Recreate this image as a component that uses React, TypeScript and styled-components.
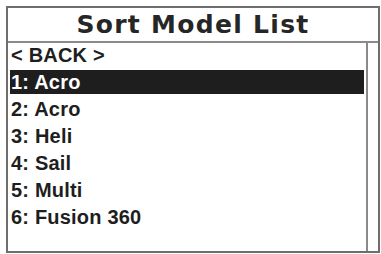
import styled, { createGlobalStyle } from "styled-components";

const GlobalStyle = createGlobalStyle`
  html, body {
    margin: 0;
    padding: 0;
    background: #ffffff;
  }
`;

const Frame = styled.div`
  box-sizing: border-box;
  margin: 6px 0 0 6px;
  width: 374px;
  height: 247px;
  border: 2px solid #6e6e6e;
  display: flex;
  flex-direction: column;
  background: #ffffff;
`;

const Header = styled.div`
  height: 35px;
  border-bottom: 2px solid #8a8a8a;
  display: flex;
  align-items: center;
  justify-content: center;
  padding-bottom: 1px;
  box-sizing: border-box;
  font-family: "DejaVu Sans", sans-serif;
  font-weight: 700;
  font-size: 25px;
  letter-spacing: 1.3px;
  color: #262626;
`;

const Body = styled.div`
  flex: 1;
  display: flex;
`;

const List = styled.ul`
  flex: 1;
  margin: 0;
  padding: 0 2px;
  list-style: none;
  display: flex;
  flex-direction: column;
  gap: 3px;
`;

const Row = styled.li<{ $selected?: boolean }>`
  height: 24px;
  display: flex;
  align-items: center;
  padding-left: 1px;
  font-family: "Liberation Sans", Arial, sans-serif;
  font-weight: 700;
  font-size: 20px;
  letter-spacing: 0.2px;
  color: ${(p) => (p.$selected ? "#ffffff" : "#1e1e1e")};
  background: ${(p) => (p.$selected ? "#1e1e1e" : "transparent")};
`;

const ScrollTrack = styled.div`
  width: 10px;
  border-left: 2px solid #8a8a8a;
`;

const items = [
  "< BACK >",
  "1: Acro",
  "2: Acro",
  "3: Heli",
  "4: Sail",
  "5: Multi",
  "6: Fusion 360",
];

export default function App() {
  return (
    <>
      <GlobalStyle />
      <Frame>
        <Header>Sort Model List</Header>
        <Body>
          <List>
            {items.map((label, i) => (
              <Row key={label + i} $selected={i === 1}>
                {label}
              </Row>
            ))}
          </List>
          <ScrollTrack />
        </Body>
      </Frame>
    </>
  );
}
